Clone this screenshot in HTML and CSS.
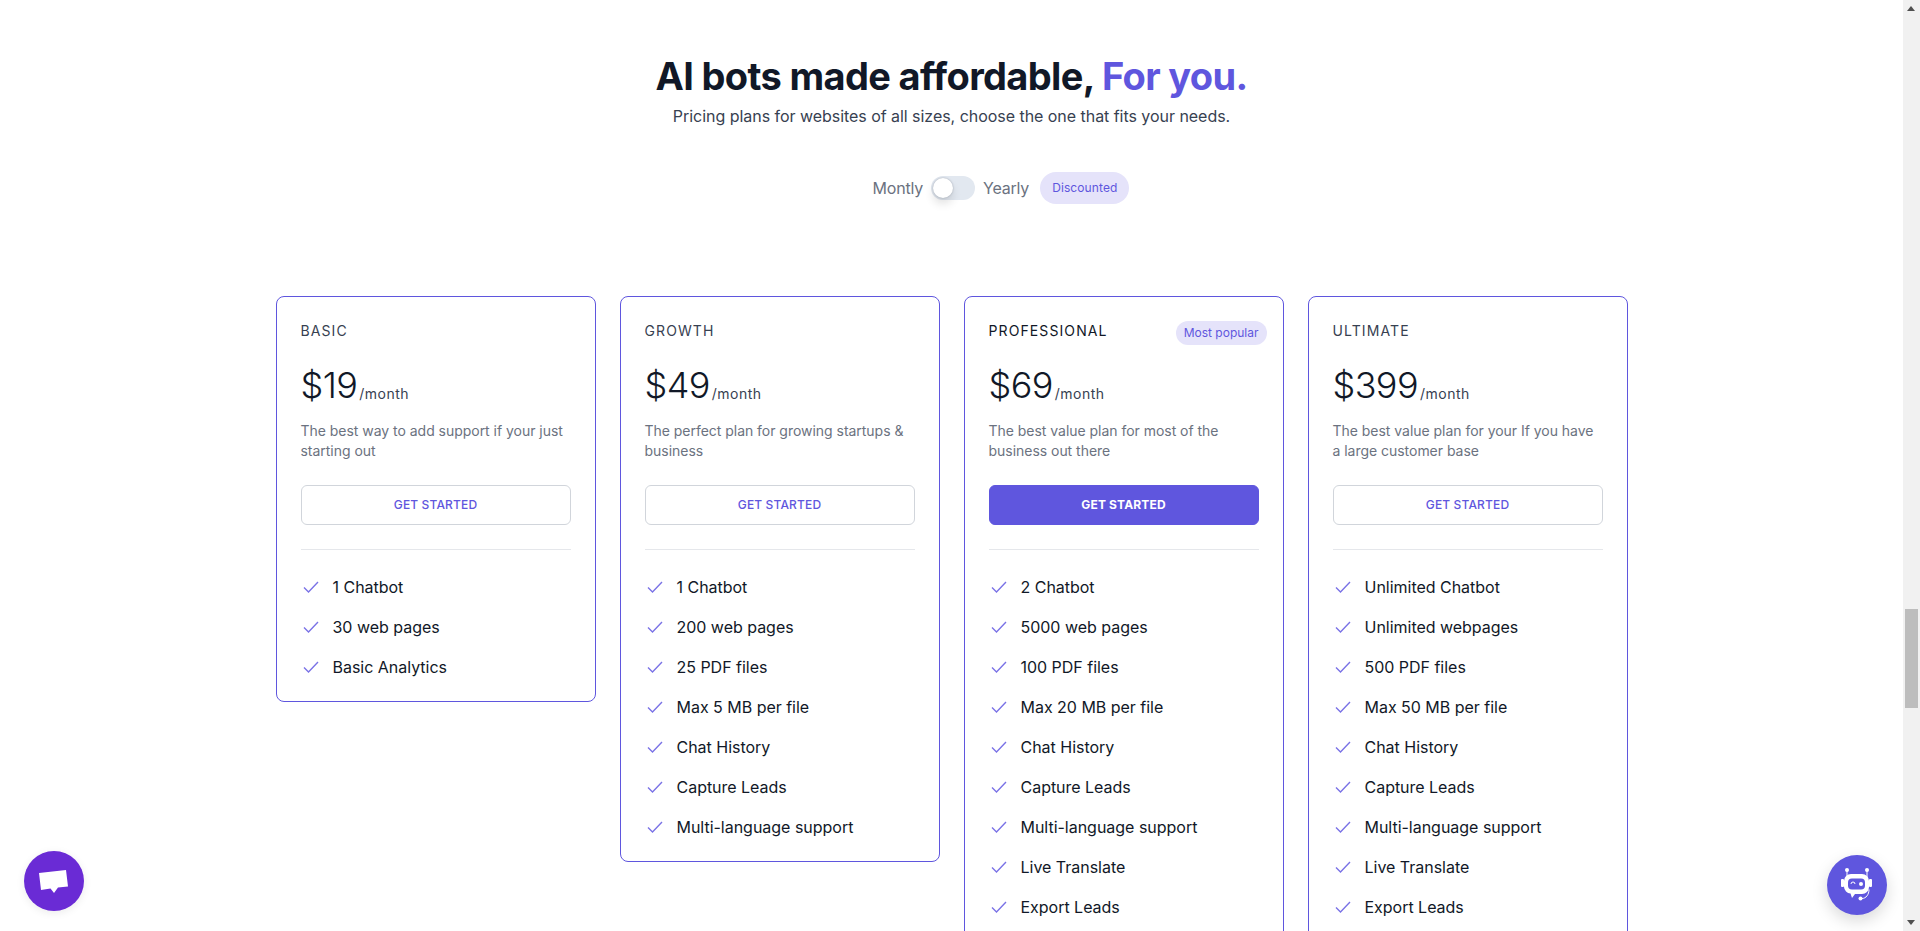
FILE: index.html
```html
<!DOCTYPE html>
<html lang="en">
<head>
<meta charset="utf-8">
<title>Pricing</title>
<link rel="stylesheet" href="styles.css">
</head>
<body>
<main class="page">
  <header class="intro">
    <h1 class="title">AI bots made affordable, <span class="accent">For you.</span></h1>
    <p class="subtitle">Pricing plans for websites of all sizes, choose the one that fits your needs.</p>
  </header>
  <div class="billing">
    <span class="billing-label">Montly</span>
    <span class="toggle"><span class="knob"></span></span>
    <span class="billing-label">Yearly</span>
    <span class="pill">Discounted</span>
  </div>
  <section class="plans">
    <article class="card">
      <div class="card-head"><h2 class="plan-name">BASIC</h2></div>
      <p class="price"><span class="amount">$19</span><span class="per">/month</span></p>
      <p class="desc">The best way to add support if your just starting out</p>
      <a class="btn">GET STARTED</a>
      <hr class="rule">
      <ul class="features">
        <li><svg class="check" viewBox="0 0 16 12"><path d="M1 6.5 5.500 11 15 1"/></svg>1 Chatbot</li>
        <li><svg class="check" viewBox="0 0 16 12"><path d="M1 6.5 5.500 11 15 1"/></svg>30 web pages</li>
        <li><svg class="check" viewBox="0 0 16 12"><path d="M1 6.5 5.500 11 15 1"/></svg>Basic Analytics</li>
      </ul>
    </article>
    <article class="card">
      <div class="card-head"><h2 class="plan-name">GROWTH</h2></div>
      <p class="price"><span class="amount">$49</span><span class="per">/month</span></p>
      <p class="desc">The perfect plan for growing startups &amp; business</p>
      <a class="btn">GET STARTED</a>
      <hr class="rule">
      <ul class="features">
        <li><svg class="check" viewBox="0 0 16 12"><path d="M1 6.5 5.500 11 15 1"/></svg>1 Chatbot</li>
        <li><svg class="check" viewBox="0 0 16 12"><path d="M1 6.5 5.500 11 15 1"/></svg>200 web pages</li>
        <li><svg class="check" viewBox="0 0 16 12"><path d="M1 6.5 5.500 11 15 1"/></svg>25 PDF files</li>
        <li><svg class="check" viewBox="0 0 16 12"><path d="M1 6.5 5.500 11 15 1"/></svg>Max 5 MB per file</li>
        <li><svg class="check" viewBox="0 0 16 12"><path d="M1 6.5 5.500 11 15 1"/></svg>Chat History</li>
        <li><svg class="check" viewBox="0 0 16 12"><path d="M1 6.5 5.500 11 15 1"/></svg>Capture Leads</li>
        <li><svg class="check" viewBox="0 0 16 12"><path d="M1 6.5 5.500 11 15 1"/></svg>Multi-language support</li>
      </ul>
    </article>
    <article class="card">
      <div class="card-head"><h2 class="plan-name plan-strong">PROFESSIONAL</h2><span class="badge">Most popular</span></div>
      <p class="price"><span class="amount">$69</span><span class="per">/month</span></p>
      <p class="desc">The best value plan for most of the business out there</p>
      <a class="btn btn-primary">GET STARTED</a>
      <hr class="rule">
      <ul class="features">
        <li><svg class="check" viewBox="0 0 16 12"><path d="M1 6.5 5.500 11 15 1"/></svg>2 Chatbot</li>
        <li><svg class="check" viewBox="0 0 16 12"><path d="M1 6.5 5.500 11 15 1"/></svg>5000 web pages</li>
        <li><svg class="check" viewBox="0 0 16 12"><path d="M1 6.5 5.500 11 15 1"/></svg>100 PDF files</li>
        <li><svg class="check" viewBox="0 0 16 12"><path d="M1 6.5 5.500 11 15 1"/></svg>Max 20 MB per file</li>
        <li><svg class="check" viewBox="0 0 16 12"><path d="M1 6.5 5.500 11 15 1"/></svg>Chat History</li>
        <li><svg class="check" viewBox="0 0 16 12"><path d="M1 6.5 5.500 11 15 1"/></svg>Capture Leads</li>
        <li><svg class="check" viewBox="0 0 16 12"><path d="M1 6.5 5.500 11 15 1"/></svg>Multi-language support</li>
        <li><svg class="check" viewBox="0 0 16 12"><path d="M1 6.5 5.500 11 15 1"/></svg>Live Translate</li>
        <li><svg class="check" viewBox="0 0 16 12"><path d="M1 6.5 5.500 11 15 1"/></svg>Export Leads</li>
      </ul>
    </article>
    <article class="card">
      <div class="card-head"><h2 class="plan-name">ULTIMATE</h2></div>
      <p class="price"><span class="amount">$399</span><span class="per">/month</span></p>
      <p class="desc">The best value plan for your If you have a large customer base</p>
      <a class="btn">GET STARTED</a>
      <hr class="rule">
      <ul class="features">
        <li><svg class="check" viewBox="0 0 16 12"><path d="M1 6.5 5.500 11 15 1"/></svg>Unlimited Chatbot</li>
        <li><svg class="check" viewBox="0 0 16 12"><path d="M1 6.5 5.500 11 15 1"/></svg>Unlimited webpages</li>
        <li><svg class="check" viewBox="0 0 16 12"><path d="M1 6.5 5.500 11 15 1"/></svg>500 PDF files</li>
        <li><svg class="check" viewBox="0 0 16 12"><path d="M1 6.5 5.500 11 15 1"/></svg>Max 50 MB per file</li>
        <li><svg class="check" viewBox="0 0 16 12"><path d="M1 6.5 5.500 11 15 1"/></svg>Chat History</li>
        <li><svg class="check" viewBox="0 0 16 12"><path d="M1 6.5 5.500 11 15 1"/></svg>Capture Leads</li>
        <li><svg class="check" viewBox="0 0 16 12"><path d="M1 6.5 5.500 11 15 1"/></svg>Multi-language support</li>
        <li><svg class="check" viewBox="0 0 16 12"><path d="M1 6.5 5.500 11 15 1"/></svg>Live Translate</li>
        <li><svg class="check" viewBox="0 0 16 12"><path d="M1 6.5 5.500 11 15 1"/></svg>Export Leads</li>
      </ul>
    </article>
  </section>
</main>
<div class="scrollbar" aria-hidden="true">
  <span class="arrow arrow-up"></span>
  <span class="track"><span class="thumb"></span></span>
  <span class="arrow arrow-down"></span>
</div>
<button class="fab fab-chat" aria-label="Chat">
  <svg viewBox="0 0 30 24" width="30" height="24"><path d="M0 4 27 1 29 17.500 19 18.500 15 24 11.500 19.500 2 21Z" fill="#fff"/></svg>
</button>
<button class="fab fab-bot" aria-label="Bot">
  <svg viewBox="0 0 32 36" width="32" height="36">
    <g fill="#fff">
      <circle cx="6" cy="3" r="2"/><circle cx="26" cy="3" r="2"/>
      <rect x="5.500" y="3" width="1" height="8"/><rect x="25.500" y="3" width="1" height="8"/>
      <rect x="0" y="12" width="3" height="8" rx="1"/><rect x="28" y="12" width="3" height="8" rx="1"/>
      <path d="M10 7h11a7 7 0 0 1 7 7v6a7 7 0 0 1-7 7h-7l-3 4-1.500-4.500A7 7 0 0 1 3 20v-6a7 7 0 0 1 7-7Z"/>
      <circle cx="19.500" cy="31.500" r="2"/>
    </g>
    <rect x="7" y="11.500" width="17" height="11" rx="4" fill="#5f56de"/>
    <path d="M10 17a2 2 0 0 1 4 0" fill="none" stroke="#fff" stroke-width="1"/>
    <circle cx="20" cy="17" r="2" fill="#fff"/>
    <path d="M21 31.500c4 0 7-4 7-9" fill="none" stroke="#fff" stroke-width="1"/>
  </svg>
</button>
</body>
</html>
```
FILE: styles.css
```css
* { box-sizing: border-box; }
html, body { margin: 0; height: 931px; overflow: hidden; background: #fff; }
body {
  display: flex;
  font-family: "Inter", "Noto Sans", sans-serif;
  color: #111827;
}
.page { flex: 1; min-width: 0; height: 931px; overflow: hidden; }
.intro { text-align: center; padding-top: 50px; }
.title { margin: 0; font-size: 38px; line-height: 52px; font-weight: 700; letter-spacing: -.65px; color: #111827; }
.accent { color: #5f56de; }
.subtitle { margin: 2px 0 0; font-size: 16px; line-height: 24px; color: #374151; letter-spacing: -.04px; }
.billing { display: flex; align-items: center; justify-content: center; margin-top: 44px; height: 32px; padding-left: 99px; }
.billing-label { font-size: 16px; color: #6b7280; letter-spacing: -.2px; }
.toggle { width: 44px; height: 24px; margin: 0 8px; border-radius: 12px; background: #e2e8f0; padding: 2px; position: relative; }
.knob { display: block; width: 20px; height: 20px; border-radius: 50%; background: #fff; box-shadow: 0 0 2px #9ca3af, 0 6px 10px rgba(0,0,0,.12); }
.pill { margin-left: 11px; height: 32px; padding: 0 12px; border-radius: 16px; background: #e5e3fa; color: #5f56de; font-size: 12px; line-height: 32px; letter-spacing: .1px; }
.plans { display: flex; align-items: flex-start; justify-content: center; gap: 24px; margin-top: 92px; }
.card { width: 320px; flex: none; border: 1px solid #5f56de; border-radius: 8px; padding: 24px 24px 14px; background: #fff; }
.card-head { height: 18px; display: flex; align-items: center; justify-content: space-between; position: relative; top: 1px; }
.plan-name { margin: 0; font-size: 14px; line-height: 18px; font-weight: 400; letter-spacing: 1.1px; color: #374151; }
.plan-strong { color: #111827; }
.badge { position: absolute; right: -8px; top: -1px; height: 24px; padding: 0 8px; border-radius: 12px; background: #e5e3fa; color: #5f56de; font-size: 12px; line-height: 24px; }
.price { margin: 24px 0 0; height: 44px; display: flex; align-items: baseline; line-height: 44px; }
.amount { font-size: 36px; font-weight: 300; letter-spacing: -.6px; color: #111827; }
.per { font-size: 14px; color: #374151; margin-left: 2px; letter-spacing: .5px; position: relative; top: 1px; }
.desc { margin: 14px 0 0; font-size: 14px; line-height: 20px; color: #6b7280; height: 40px; letter-spacing: -.03px; }
.btn { display: block; margin-top: 24px; height: 40px; border: 1px solid #d1d5db; border-radius: 6px; color: #5f56de; text-align: center; font-size: 12px; line-height: 38px; font-weight: 450; letter-spacing: .15px; }
.btn-primary { background: #5f56de; border-color: #5f56de; color: #fff; font-weight: 700; }
.rule { margin: 24px 0 0; border: 0; border-top: 1px solid #e5e7eb; height: 0; }
.features { list-style: none; margin: 17px 0 0; padding: 0; }
.features li { display: flex; align-items: center; height: 40px; font-size: 16px; color: #111827; letter-spacing: -.02px; }
.check { width: 16px; height: 12px; margin: 0 14px 0 2px; flex: none; fill: none; stroke: #7a72e6; stroke-width: 1.4; }
.scrollbar { width: 17px; flex: none; height: 931px; background: #f1f1f1; display: flex; flex-direction: column; }
.arrow { height: 17px; flex: none; position: relative; }
.arrow::after { content: ""; position: absolute; left: 4px; border-left: 4.500px solid transparent; border-right: 4.500px solid transparent; }
.arrow-up::after { top: 6px; border-bottom: 5px solid #505050; }
.arrow-down::after { top: 6px; border-top: 5px solid #505050; }
.track { flex: 1; padding-top: 592px; }
.thumb { display: block; height: 99px; margin: 0 2px; background: #bdbdbd; }
.fab { position: fixed; width: 60px; height: 60px; border: 0; padding: 0; border-radius: 50%; display: flex; align-items: center; justify-content: center; }
.fab-chat { left: 24px; top: 851px; background: #6a2bd5; box-shadow: 0 2px 8px rgba(0,0,0,.08); }
.fab-bot { left: 1827px; top: 855px; background: #5f56de; box-shadow: 0 6px 16px rgba(0,0,0,.15); }
```
